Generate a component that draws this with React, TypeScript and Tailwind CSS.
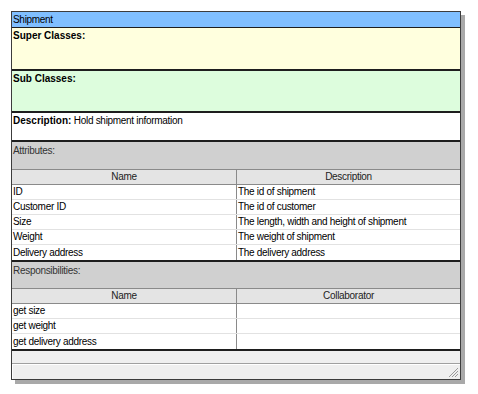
import React from "react";

const attributes = [
  { name: "ID", desc: "The id of shipment" },
  { name: "Customer ID", desc: "The id of customer" },
  { name: "Size", desc: "The length, width and height of shipment" },
  { name: "Weight", desc: "The weight of shipment" },
  { name: "Delivery address", desc: "The delivery address" },
];

const responsibilities = ["get size", "get weight", "get delivery address"];

function HeaderRow({ left, right }: { left: string; right: string }) {
  return (
    <div className="flex h-[16px] bg-[#e4e4e4] border-t border-b border-[#8a8a8a] text-[#222]">
      <div className="w-[224px] flex items-center justify-center">{left}</div>
      <div className="flex-1 flex items-center justify-center border-l border-[#8a8a8a]">{right}</div>
    </div>
  );
}

function DataRow({ left, right, last }: { left: string; right: string; last?: boolean }) {
  return (
    <div className={`flex h-[15px] bg-white ${last ? "" : "border-b border-[#e2e2e2]"}`}>
      <div className="w-[224px] pl-[1px] flex items-center">{left}</div>
      <div className="flex-1 pl-[1px] flex items-center border-l border-[#8a8a8a]">{right}</div>
    </div>
  );
}

export default function App() {
  return (
    <div
      className="w-[478px] h-[394px] bg-white pt-[11px] pl-[11px] text-[10px] tracking-[-0.3px] text-black leading-none"
      style={{ fontFamily: '"Liberation Sans", Arial, sans-serif' }}
    >
      <div className="w-[450px] border border-[#3c3c3c] shadow-[4px_4px_0_0_#a9a9a9] flex flex-col">
        {/* Title */}
        <div className="h-[16px] bg-[#80bfff] border-b border-[#1e1e1e] pl-[1px] flex items-center">
          Shipment
        </div>

        {/* Super classes */}
        <div className="h-[43px] bg-[#ffffde] border-b-2 border-[#1e1e1e] pl-[1px] pt-[3px] font-bold tracking-normal">
          Super Classes:
        </div>

        {/* Sub classes */}
        <div className="h-[42px] bg-[#ddfddd] border-b-2 border-[#1e1e1e] pl-[1px] pt-[3px] font-bold tracking-normal">
          Sub Classes:
        </div>

        {/* Description */}
        <div className="h-[29px] bg-white border-b-2 border-[#1e1e1e] pl-[1px] pt-[3px]">
          <span className="font-bold tracking-normal">Description:</span> Hold shipment information
        </div>

        {/* Attributes */}
        <div className="h-[27px] bg-[#d0d0d0] pl-[1px] pt-[4px] text-[#333]">Attributes:</div>
        <HeaderRow left="Name" right="Description" />
        {attributes.map((a, i) => (
          <DataRow key={a.name} left={a.name} right={a.desc} last={i === attributes.length - 1} />
        ))}
        <div className="h-[2px] bg-[#1e1e1e]" />

        {/* Responsibilities */}
        <div className="h-[26px] bg-[#d0d0d0] pl-[1px] pt-[4px] text-[#333]">Responsibilities:</div>
        <HeaderRow left="Name" right="Collaborator" />
        {responsibilities.map((r, i) => (
          <DataRow key={r} left={r} right="" last={i === responsibilities.length - 1} />
        ))}
        <div className="h-[2px] bg-[#1e1e1e]" />

        {/* Empty bar */}
        <div className="h-[13px] bg-[#efefef] border-b border-[#a0a0a0]" />

        {/* Status bar */}
        <div className="h-[15px] bg-[#efefef] border-t border-l border-white flex justify-end items-end">
          <svg width="12" height="12" viewBox="0 0 12 12" className="mr-[1px] mb-[1px]">
            <line x1="11" y1="2" x2="2" y2="11" stroke="#9a9a9a" strokeWidth="1" />
            <line x1="11" y1="5" x2="5" y2="11" stroke="#9a9a9a" strokeWidth="1" />
            <line x1="11" y1="8" x2="8" y2="11" stroke="#9a9a9a" strokeWidth="1" />
          </svg>
        </div>
      </div>
    </div>
  );
}
